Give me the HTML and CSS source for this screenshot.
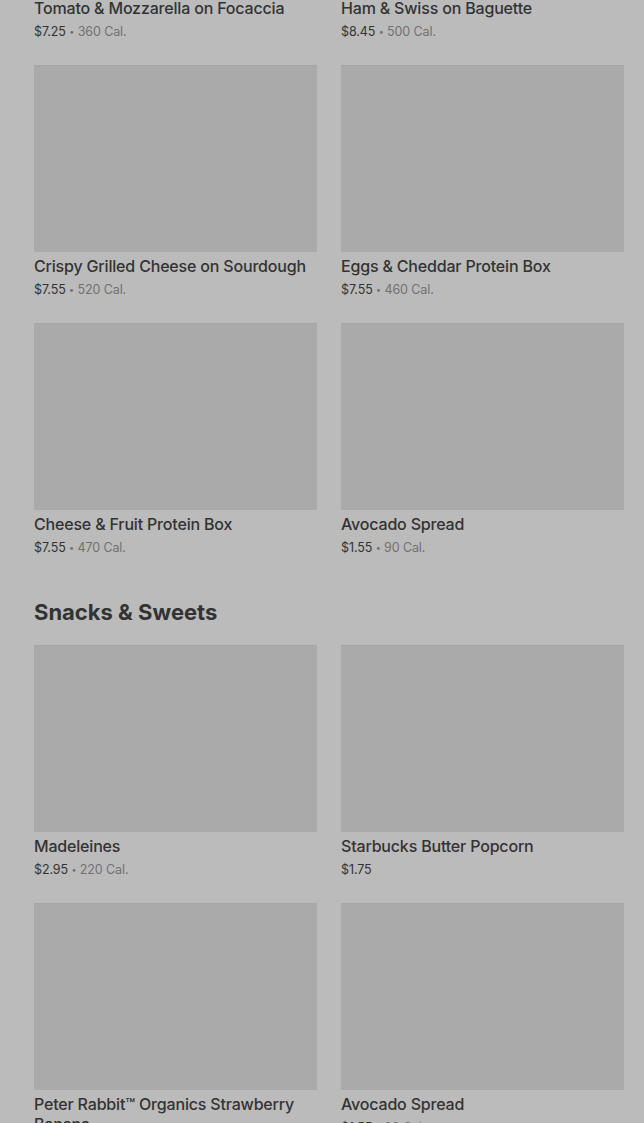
FILE: index.html
```html
<!DOCTYPE html>
<html lang="en">
<head>
    <meta charset="UTF-8">
    <meta name="viewport" content="width=device-width, initial-scale=1.0">
    <title>Menu</title>
    <link rel="stylesheet" href="styles.css">
</head>
<body>
    <div class="menu">
        <div class="grid first">
            <div class="item">
                <div class="thumb"></div>
                <div class="name">Tomato &amp; Mozzarella on Focaccia</div>
                <div class="meta"><span class="price">$7.25</span> <span class="dot">&bull;</span> 360 Cal.</div>
            </div>
            <div class="item">
                <div class="thumb"></div>
                <div class="name">Ham &amp; Swiss on Baguette</div>
                <div class="meta"><span class="price">$8.45</span> <span class="dot">&bull;</span> 500 Cal.</div>
            </div>
            <div class="item">
                <div class="thumb"></div>
                <div class="name">Crispy Grilled Cheese on Sourdough</div>
                <div class="meta"><span class="price">$7.55</span> <span class="dot">&bull;</span> 520 Cal.</div>
            </div>
            <div class="item">
                <div class="thumb"></div>
                <div class="name">Eggs &amp; Cheddar Protein Box</div>
                <div class="meta"><span class="price">$7.55</span> <span class="dot">&bull;</span> 460 Cal.</div>
            </div>
            <div class="item">
                <div class="thumb"></div>
                <div class="name">Cheese &amp; Fruit Protein Box</div>
                <div class="meta"><span class="price">$7.55</span> <span class="dot">&bull;</span> 470 Cal.</div>
            </div>
            <div class="item">
                <div class="thumb"></div>
                <div class="name">Avocado Spread</div>
                <div class="meta"><span class="price">$1.55</span> <span class="dot">&bull;</span> 90 Cal.</div>
            </div>
        </div>

        <h2 class="section-title">Snacks &amp; Sweets</h2>

        <div class="grid">
            <div class="item">
                <div class="thumb"></div>
                <div class="name">Madeleines</div>
                <div class="meta"><span class="price">$2.95</span> <span class="dot">&bull;</span> 220 Cal.</div>
            </div>
            <div class="item">
                <div class="thumb"></div>
                <div class="name">Starbucks Butter Popcorn</div>
                <div class="meta"><span class="price">$1.75</span></div>
            </div>
            <div class="item">
                <div class="thumb"></div>
                <div class="name">Peter Rabbit&trade; Organics Strawberry Banana</div>
                <div class="meta"><span class="price">$1.25</span> <span class="dot">&bull;</span> 60 Cal.</div>
            </div>
            <div class="item">
                <div class="thumb"></div>
                <div class="name">Avocado Spread</div>
                <div class="meta"><span class="price">$1.55</span> <span class="dot">&bull;</span> 90 Cal.</div>
            </div>
        </div>
    </div>
</body>
</html>
```

FILE: styles.css
```css
/* Reset */
*
{
    margin: 0;
    padding: 0;
    box-sizing: border-box;
}

body
{
    background-color: #bbbbbb;
    font-family: Inter, "Noto Sans", Arial, sans-serif;
    color: #2f2f2f;
    overflow: hidden;
}

.menu
{
    padding: 0 20px 0 34px;
}

.grid
{
    display: grid;
    grid-template-columns: repeat(2, 1fr);
    column-gap: 24px;
    row-gap: 24px;
}

/* list is scrolled: first row image sits above the viewport */
.grid.first
{
    margin-top: -193px;
}

.thumb
{
    height: 187px;
    background-color: #aaaaaa;
    border-top: 1px solid #a6a6a6;
}

.name
{
    margin-top: 4px;
    font-size: 16px;
    font-weight: 500;
    line-height: 20px;
    letter-spacing: -0.18px;
    color: #333333;
}

.meta
{
    margin-top: 5px;
    font-size: 12.5px;
    line-height: 18px;
    letter-spacing: -0.1px;
    color: #717171;
}

.price
{
    color: #333333;
}

.dot
{
    font-size: 9px;
    vertical-align: 1px;
}

.section-title
{
    margin: 41px 0 19px;
    font-size: 22px;
    font-weight: 700;
    line-height: 28px;
    color: #333333;
}
```
